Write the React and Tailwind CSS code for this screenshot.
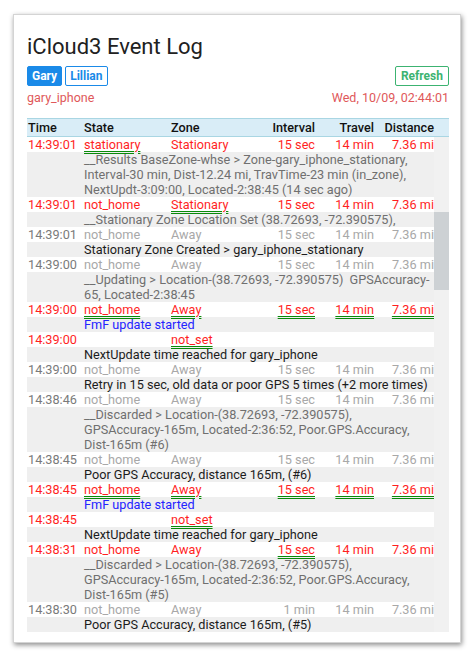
import React from "react"

const RED = "text-[#ff1f1f]"
const DIM = "text-[#a8a8a8]"

const UL = "underline decoration-double decoration-[#0a8a0a] underline-offset-2"

const log = [
  { time: "14:39:01", state: "stationary", zone: "Stationary", interval: "15 sec", travel: "14 min", dist: "7.36 mi", hot: true, ul: ["state"] },
  {
    lines: [
      "__Results BaseZone-whse > Zone-gary_iphone_stationary,",
      "Interval-30 min, Dist-12.24 mi, TravTime-23 min (in_zone),",
      "NextUpdt-3:09:00, Located-2:38:45 (14 sec ago)",
    ],
    tone: "gray",
  },
  { time: "14:39:01", state: "not_home", zone: "Stationary", interval: "15 sec", travel: "14 min", dist: "7.36 mi", hot: true, ul: ["zone"] },
  { lines: ["__Stationary Zone Location Set (38.72693, -72.390575),"], tone: "gray" },
  { time: "14:39:01", state: "not_home", zone: "Away", interval: "15 sec", travel: "14 min", dist: "7.36 mi" },
  { lines: ["Stationary Zone Created > gary_iphone_stationary"], tone: "black" },
  { time: "14:39:00", state: "not_home", zone: "Away", interval: "15 sec", travel: "14 min", dist: "7.36 mi" },
  {
    lines: ["__Updating > Location-(38.72693, -72.390575)  GPSAccuracy-", "65, Located-2:38:45"],
    tone: "gray",
  },
  { time: "14:39:00", state: "not_home", zone: "Away", interval: "15 sec", travel: "14 min", dist: "7.36 mi", hot: true, ul: ["state", "zone", "interval", "travel", "dist"] },
  { lines: ["FmF update started"], tone: "blue" },
  { time: "14:39:00", state: "", zone: "not_set", interval: "", travel: "", dist: "", hot: true, ul: ["zone"] },
  { lines: ["NextUpdate time reached for gary_iphone"], tone: "black" },
  { time: "14:39:00", state: "not_home", zone: "Away", interval: "15 sec", travel: "14 min", dist: "7.36 mi" },
  { lines: ["Retry in 15 sec, old data or poor GPS 5 times (+2 more times)"], tone: "black" },
  { time: "14:38:46", state: "not_home", zone: "Away", interval: "15 sec", travel: "14 min", dist: "7.36 mi" },
  {
    lines: [
      "__Discarded > Location-(38.72693, -72.390575),",
      "GPSAccuracy-165m, Located-2:36:52, Poor.GPS.Accuracy,",
      "Dist-165m (#6)",
    ],
    tone: "gray",
  },
  { time: "14:38:45", state: "not_home", zone: "Away", interval: "15 sec", travel: "14 min", dist: "7.36 mi" },
  { lines: ["Poor GPS Accuracy, distance 165m, (#6)"], tone: "black" },
  { time: "14:38:45", state: "not_home", zone: "Away", interval: "15 sec", travel: "14 min", dist: "7.36 mi", hot: true, ul: ["state", "zone", "interval", "travel", "dist"] },
  { lines: ["FmF update started"], tone: "blue" },
  { time: "14:38:45", state: "", zone: "not_set", interval: "", travel: "", dist: "", hot: true, ul: ["zone"] },
  { lines: ["NextUpdate time reached for gary_iphone"], tone: "black" },
  { time: "14:38:31", state: "not_home", zone: "Away", interval: "15 sec", travel: "14 min", dist: "7.36 mi", hot: true, ul: ["interval"] },
  {
    lines: [
      "__Discarded > Location-(38.72693, -72.390575),",
      "GPSAccuracy-165m, Located-2:36:52, Poor.GPS.Accuracy,",
      "Dist-165m (#5)",
    ],
    tone: "gray",
  },
  { time: "14:38:30", state: "not_home", zone: "Away", interval: "1 min", travel: "14 min", dist: "7.36 mi" },
  { lines: ["Poor GPS Accuracy, distance 165m, (#5)"], tone: "black" },
]

const toneClass = {
  gray: "text-[#707070]",
  black: "text-[#1c1c1c]",
  blue: "text-[#2424ff]",
}

function Cell({ row, field, right }) {
  const underlined = row.ul && row.ul.includes(field)
  const color = row.hot ? RED : DIM
  return (
    <div className={right ? "text-right" : ""}>
      <span className={`${color} ${underlined ? UL : ""}`}>{row[field]}</span>
    </div>
  )
}

function DataRow({ row }) {
  return (
    <div className="grid grid-cols-[57px_87px_84px_60px_59px_60px] h-[15px] bg-white whitespace-nowrap">
      <div className={`pl-px ${row.hot ? RED : "text-[#7a7a7a]"}`}>{row.time}</div>
      <Cell row={row} field="state" />
      <Cell row={row} field="zone" />
      <Cell row={row} field="interval" right />
      <Cell row={row} field="travel" right />
      <Cell row={row} field="dist" right />
    </div>
  )
}

function DetailRow({ row }) {
  return (
    <div className={`bg-[#efefef] pl-[57px] whitespace-nowrap ${toneClass[row.tone]}`}>
      {row.lines.map((l, i) => (
        <div key={i} className="h-[15px] whitespace-pre">{l}</div>
      ))}
    </div>
  )
}

export default function App() {
  return (
    <div className="min-h-[661px] bg-white pt-[14px] pl-[13px] pr-[12px] font-['Roboto',sans-serif]">
      <div className="w-[448px] h-[629px] bg-white border border-[#d4d4d4] shadow-[1px_2px_5px_rgba(0,0,0,0.45)] pl-[13px] pr-[11px] pt-[18px]">
        <h1 className="text-[22px] leading-[28px] text-[#212121]">iCloud3 Event Log</h1>

        <div className="mt-[5px] flex items-center justify-between">
          <div className="flex gap-[3px]">
            <button className="h-[20px] px-[4px] bg-[#1a8ae8] border border-[#1a8ae8] text-white text-[12px] font-bold leading-[18px] rounded-[2px]">
              Gary
            </button>
            <button className="h-[20px] px-[4px] bg-white border border-[#1a8ae8] text-[#1a8ae8] text-[12px] font-bold leading-[18px] rounded-[2px]">
              Lillian
            </button>
          </div>
          <button className="h-[20px] px-[5px] bg-white border border-[#3cb371] text-[#3cb371] text-[12px] font-bold leading-[18px] rounded-[2px]">
            Refresh
          </button>
        </div>

        <div className="mt-[4px] flex justify-between text-[12.5px] leading-[16px] text-[#e0585a]">
          <span>gary_iphone</span>
          <span>Wed, 10/09, 02:44:01</span>
        </div>

        <div className="mt-[12px] text-[12.7px] leading-[15px]">
          <div className="grid grid-cols-[57px_87px_84px_60px_59px_60px_1fr] h-[19px] items-center bg-[#d9edf7] border-y border-[#a9d6e3] font-medium text-[#111]">
            <div className="pl-px">Time</div>
            <div>State</div>
            <div>Zone</div>
            <div className="text-right">Interval</div>
            <div className="text-right">Travel</div>
            <div className="text-right">Distance</div>
            <div />
          </div>

          <div className="flex">
            <div className="w-[407px]">
              {log.map((row, i) =>
                row.lines ? <DetailRow key={i} row={row} /> : <DataRow key={i} row={row} />
              )}
            </div>
            <div className="w-[15px] bg-[#f1f1f1]">
              <div className="mt-[75px] h-[78px] bg-[#cdd1d4]" />
            </div>
          </div>
        </div>
      </div>
    </div>
  )
}
